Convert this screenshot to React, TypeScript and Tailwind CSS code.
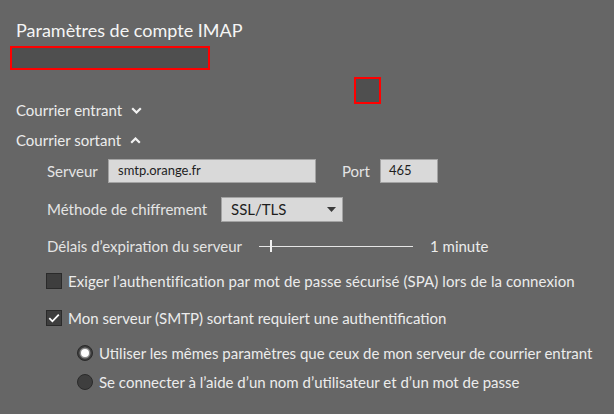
import React from 'react';

const font = { fontFamily: 'Lato, "Noto Sans", sans-serif' };

const Chevron: React.FC<{ up?: boolean }> = ({ up }) => (
  <svg width="11" height="7" viewBox="0 0 11 7" className="ml-[9px]">
    <path
      d={up ? 'M1.2 5.8 L5.5 1.5 L9.8 5.8' : 'M1.2 1.2 L5.5 5.5 L9.8 1.2'}
      fill="none"
      stroke="#f2f2f2"
      strokeWidth="2.2"
    />
  </svg>
);

const Checkbox: React.FC<{ checked?: boolean }> = ({ checked }) => (
  <div className="w-4 h-4 shrink-0 bg-[#3e3e3e] border border-[#2a2a2a] flex items-center justify-center">
    {checked && (
      <svg width="12" height="10" viewBox="0 0 12 10">
        <path d="M1.3 5.2 L4.4 8.3 L10.8 1.6" fill="none" stroke="#ffffff" strokeWidth="1.8" />
      </svg>
    )}
  </div>
);

const Radio: React.FC<{ checked?: boolean }> = ({ checked }) => (
  <div className="w-4 h-4 shrink-0 rounded-full bg-[#3e3e3e] border border-[#2a2a2a] flex items-center justify-center">
    {checked && <div className="w-[8px] h-[8px] rounded-full bg-white ring-[1.5px] ring-[#8a8a8a]" />}
  </div>
);

const App: React.FC = () => {
  return (
    <div className="relative w-[614px] h-[414px] overflow-hidden bg-[#666666] pl-4 pt-[18px] text-[#ececec]" style={font}>
      <div className="h-6 flex items-center text-[18px] text-[#f5f5f5]">Paramètres de compte IMAP</div>

      <div className="mt-1 -ml-[6px] w-[200px] h-6 border-2 border-[#ff0000] bg-[#4f4f4f]" />

      {/* redaction over the page */}
      <div className="absolute left-[354px] top-[77px] w-[27px] h-[27px] border-2 border-[#ff0000] bg-[#4f4f4f]" />

      <div className="mt-[30px] h-5 flex items-center text-[15px]">
        Courrier entrant
        <Chevron />
      </div>

      <div className="mt-[10px] h-5 flex items-center text-[15px]">
        Courrier sortant
        <Chevron up />
      </div>

      <div className="pl-[31px] text-[15px]">
        <div className="mt-[9px] h-6 flex items-center">
          <div className="w-[61px] text-[#e4e4e4]">Serveur</div>
          <div className="w-[208px] h-6 bg-[#d9d9d9] border border-[#a3a3a3] flex items-center pl-[9px] text-[13px] text-[#1e1e1e]">
            smtp.orange.fr
          </div>
          <div className="ml-[26px] w-[38px] text-[#e4e4e4]">Port</div>
          <div className="w-[58px] h-6 bg-[#d9d9d9] border border-[#a3a3a3] flex items-center pl-[8px] text-[13px] text-[#1e1e1e]">
            465
          </div>
        </div>

        <div className="mt-[14px] h-[25px] flex items-center">
          <div className="w-[174px] text-[#e4e4e4]">Méthode de chiffrement</div>
          <div className="w-[122px] h-[25px] bg-[#d9d9d9] border border-[#a3a3a3] flex items-center justify-between pl-[9px] pr-[6px] text-[15px] text-[#1e1e1e]">
            SSL/TLS
            <svg width="9" height="5" viewBox="0 0 9 5">
              <path d="M0 0 L9 0 L4.5 5 Z" fill="#3a3a3a" />
            </svg>
          </div>
        </div>

        <div className="mt-[14px] h-5 flex items-center">
          <div className="w-[212px] text-[#e4e4e4]">Délais d’expiration du serveur</div>
          <div className="relative w-[154px] h-5 flex items-center">
            <div className="w-full h-px bg-[#e6e6e6]" />
            <div className="absolute left-[11px] top-[4px] w-[2px] h-3 bg-[#f0f0f0]" />
          </div>
          <div className="ml-[17px]">1 minute</div>
        </div>

        <div className="mt-[17px] h-4 flex items-center -ml-px">
          <Checkbox />
          <span className="ml-[6px] tracking-[0.08px]">Exiger l’authentification par mot de passe sécurisé (SPA) lors de la connexion</span>
        </div>

        <div className="mt-[21px] h-4 flex items-center -ml-px">
          <Checkbox checked />
          <span className="ml-[6px]">Mon serveur (SMTP) sortant requiert une authentification</span>
        </div>

        <div className="pl-[30px]">
          <div className="mt-[19px] h-4 flex items-center">
            <Radio checked />
            <span className="ml-[6px]">Utiliser les mêmes paramètres que ceux de mon serveur de courrier entrant</span>
          </div>
          <div className="mt-[13px] h-4 flex items-center">
            <Radio />
            <span className="ml-[6px]">Se connecter à l’aide d’un nom d’utilisateur et d’un mot de passe</span>
          </div>
        </div>
      </div>
    </div>
  );
};

export default App;
